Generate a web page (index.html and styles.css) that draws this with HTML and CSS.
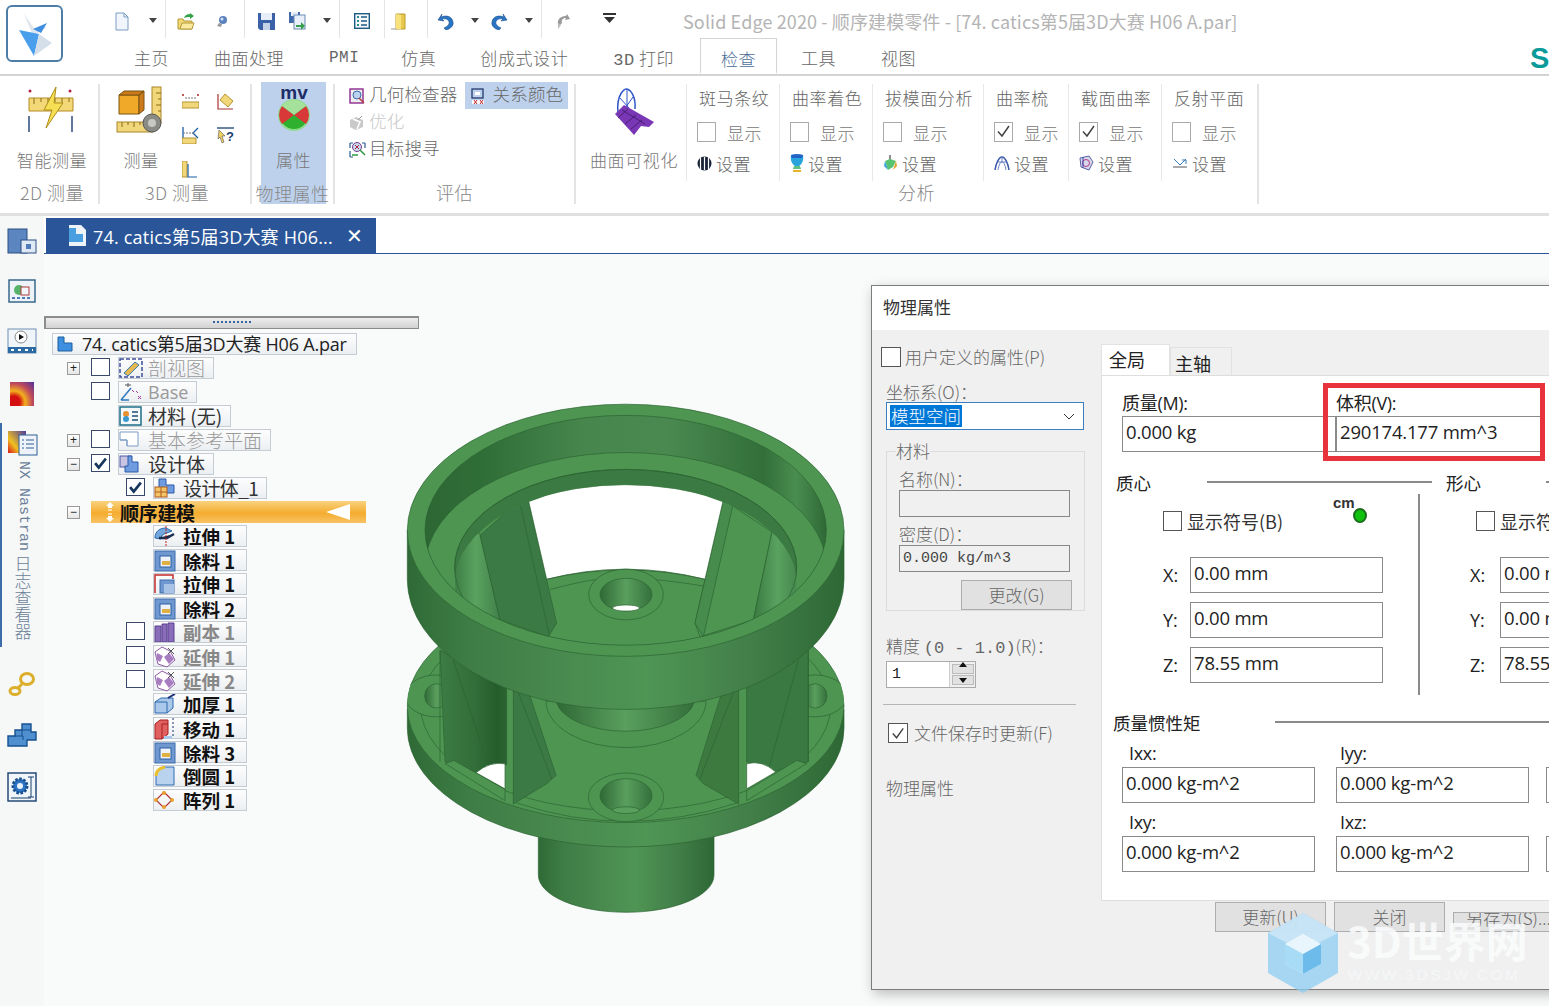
FILE: index.html
```html
<!DOCTYPE html>
<html lang="zh">
<head>
<meta charset="utf-8">
<title>Solid Edge 2020</title>
<link rel="stylesheet" href="styles.css">
</head>
<body>
<svg class="defs" width="0" height="0">
  <defs>
    <symbol id="ck" viewBox="0 0 19 19"><path d="M4 9.5l4 4.5 7-10" fill="none" stroke="#444" stroke-width="1.5"/></symbol>
    <symbol id="ckb" viewBox="0 0 19 19"><path d="M3.5 9l4 5 8-10" fill="none" stroke="#16365c" stroke-width="3"/></symbol>
    <symbol id="dd" viewBox="0 0 10 6"><path d="M1 0h8L5 5z" fill="#444"/></symbol>
    <symbol id="rem" viewBox="0 0 22 22"><rect x="1" y="1" width="20" height="20" fill="#6f98d0" stroke="#3d6cab"/><rect x="6" y="6" width="11" height="11" fill="#eef3fa" stroke="#2d5f9f"/><rect x="8" y="11" width="8" height="4" fill="#e0b040"/></symbol>
    <symbol id="ext" viewBox="0 0 22 22"><path d="M1 6l7-5 8 4 5 9-8 7-9-3z" fill="#fff" stroke="#8d5aa6"/><path d="M3 7l6 3-3 6-4-3zM10 11l5-4 5 6-5 5z" fill="#a77cc0"/><path d="M14 2l6 6M20 2l-6 6" stroke="#555"/></symbol>
  </defs>
</svg>
<div class="app">
  <header class="head">
    <div class="logo">
      <svg width="44" height="46" viewBox="0 0 44 46"><path d="M11 3l10 14 13-1-14 9z" fill="#dfe6ee"/><path d="M20 18l14-6-6 10z" fill="#3f8fe0"/><path d="M6 19l20 4-5 22z" fill="#4a9fec"/><path d="M26 23l13 9-18 13z" fill="#d5dfea"/></svg>
    </div>
    <div class="head-right">
      <div class="qat">
        <span class="q q-new"><svg width="14" height="19" viewBox="0 0 14 19"><path d="M1 1h8l4 4v13H1z" fill="#f1f6fc" stroke="#7d9cc4"/><path d="M9 1v4h4" fill="none" stroke="#7d9cc4"/></svg></span>
        <svg class="dda" viewBox="0 0 10 6"><use href="#dd"/></svg>
        <span class="qsep s1"></span>
        <span class="q q-open"><svg width="18" height="17" viewBox="0 0 18 17"><path d="M1 6h5l1 2h8v8H1z" fill="#f2d873" stroke="#b49a3a"/><path d="M3 16l2-6h12l-2 6z" fill="#fbe9a0" stroke="#b49a3a"/><path d="M7 5c1-3 3-4 6-4V0l4 3-4 3V4C11 4 9 4 7 5z" fill="#34a34a"/></svg></span>
        <span class="q q-find"><svg width="12" height="13" viewBox="0 0 12 13"><circle cx="7" cy="5" r="4" fill="#5b82bd"/><circle cx="6" cy="4" r="1.5" fill="#cfe0f5"/><path d="M3 8l-2 3 4 1 1-3z" fill="#9a9a9a"/></svg></span>
        <span class="qsep s2"></span>
        <span class="q q-save"><svg width="17" height="17" viewBox="0 0 17 17"><path d="M0 0h17v17H2l-2-2z" fill="#3a60a8"/><rect x="3" y="0" width="11" height="7" fill="#e8eef7"/><rect x="5" y="10" width="7" height="7" fill="#c5d3e8"/></svg></span>
        <span class="q q-saveas"><svg width="17" height="18" viewBox="0 0 17 18"><rect x="0" y="0" width="11" height="11" fill="#4069ae"/><rect x="2" y="0" width="7" height="4" fill="#e8eef7"/><rect x="5" y="3" width="11" height="14" fill="#e9eff8" stroke="#6b8ab7"/><path d="M7 13h5v-3l4 4-4 4v-3H7z" fill="#38a04c"/></svg></span>
        <svg class="ddb" viewBox="0 0 10 6"><use href="#dd"/></svg>
        <span class="qsep s3"></span>
        <span class="q q-props"><svg width="16" height="16" viewBox="0 0 16 16"><rect x=".7" y=".7" width="14.6" height="14.6" fill="#f4f8fc" stroke="#1c5a84" stroke-width="1.4"/><path d="M3 4h2M3 8h2M3 12h2" stroke="#2b8a8a" stroke-width="2"/><path d="M7 4h6M7 8h6M7 12h6" stroke="#1c5a84" stroke-width="1.3"/></svg></span>
        <span class="qsep s4"></span>
        <span class="q q-door"><svg width="16" height="18" viewBox="0 0 16 18"><path d="M1 17h6" stroke="#999"/><path d="M6 2h9v15H6z" fill="#e8c94e" stroke="#b99a2c"/><path d="M6 2l5 1v14l-5 0z" fill="#f7e27c"/></svg></span>
        <span class="qsep s5"></span>
        <span class="q q-undo"><svg width="17" height="17" viewBox="0 0 17 17"><path d="M5 1L1 7l6 1-2-2c4-1 8 1 7 5-1 2-3 3-5 4l2 2c4-1 8-4 7-8C15 3 9 2 4 4z" fill="#2a74c4" stroke="#174f8e" stroke-width=".6"/></svg></span>
        <svg class="ddc" viewBox="0 0 10 6"><use href="#dd"/></svg>
        <span class="q q-redo"><svg width="17" height="17" viewBox="0 0 17 17"><path d="M12 1l4 6-6 1 2-2C8 5 4 7 5 11c1 2 3 3 5 4l-2 2C4 16 0 13 1 9 2 3 8 2 13 4z" fill="#2a74c4" stroke="#174f8e" stroke-width=".6"/></svg></span>
        <svg class="ddd" viewBox="0 0 10 6"><use href="#dd"/></svg>
        <span class="qsep s6"></span>
        <span class="q q-gray"><svg width="15" height="17" viewBox="0 0 15 17"><path d="M11 1l3 5-5 1 1-2C7 5 5 7 6 10l-3 3C0 9 3 3 10 3z" fill="#999"/><path d="M2 10l3 2-3 4z" fill="#bbb"/></svg></span>
        <span class="q q-cust"><svg width="13" height="10" viewBox="0 0 13 10"><path d="M0 0h13v2H0z" fill="#333"/><path d="M1 4h11L6.500 10z" fill="#333"/></svg></span>
        <span class="title">Solid Edge 2020 - 顺序建模零件 - [74. catics第5届3D大赛 H06 A.par]</span>
      </div>
      <nav class="tabs">
        <span class="t t1">主页</span>
        <span class="t t2">曲面处理</span>
        <span class="t t3 mono">PMI</span>
        <span class="t t4">仿真</span>
        <span class="t t5">创成式设计</span>
        <span class="t t6"><span class="mono">3D</span> 打印</span>
        <span class="t t7 active">检查</span>
        <span class="t t8">工具</span>
        <span class="t t9">视图</span>
        <span class="brand">S</span>
      </nav>
    </div>
  </header>

  <section class="ribbon">
    <div class="g g1">
      <div class="big">
        <svg class="bigi" width="50" height="50" viewBox="0 0 50 50"><circle cx="3" cy="5" r="1.500" fill="#b02040"/><circle cx="43" cy="5" r="1.500" fill="#b02040"/><path d="M2 12h44v13H2z" fill="#f3d878" stroke="#b58b24"/><path d="M7 12v6M14 12v4M21 12v6M28 12v4M35 12v6M42 12v4" stroke="#8a6a18"/><path d="M2 30v16M45 30v16" stroke="#2d4a80" stroke-width="1.500"/><path d="M29 1L17 24h8l-6 18 17-25h-9z" fill="#f7df55" stroke="#ad8d1c"/></svg>
        <span class="bl">智能测量</span>
      </div>
      <div class="gl">2D 测量</div>
    </div>
    <div class="g g2">
      <div class="gbody g2b">
        <div class="big m">
          <svg class="bigi" width="50" height="50" viewBox="0 0 50 50"><path d="M3 9h20v19H3z" fill="#f0a928" stroke="#7a5510"/><path d="M3 9l5-4h20l-5 4zM23 9l5-4v19l-5 4z" fill="#cb7b1c" stroke="#7a5510"/><rect x="36" y="1" width="9" height="36" fill="#f2d67a" stroke="#a9862b"/><rect x="1" y="36" width="36" height="10" fill="#f2d67a" stroke="#a9862b"/><path d="M6 36v5M12 36v3M18 36v5M24 36v3M40 7h5M42 13h3M40 19h5M42 25h3" stroke="#8a6a18"/><circle cx="36" cy="37" r="9" fill="#8b8b85" stroke="#555"/><circle cx="36" cy="37" r="4" fill="#c9c9c2"/></svg>
          <span class="bl">测量</span>
        </div>
        <div class="minis">
          <svg width="17" height="17" viewBox="0 0 17 17"><circle cx="1" cy="2" r="1" fill="#a22"/><circle cx="16" cy="2" r="1" fill="#a22"/><path d="M3 5h11" stroke="#777" stroke-dasharray="2 1"/><rect x="0" y="9" width="17" height="6" fill="#f2d67a" stroke="#b59535"/></svg>
          <svg width="17" height="17" viewBox="0 0 17 17"><path d="M1 1v15h15" fill="none" stroke="#a33" stroke-width="1.200"/><path d="M3 7l5-6 8 7-5 6z" fill="#f2d67a" stroke="#b59535"/></svg>
          <svg width="17" height="18" viewBox="0 0 17 18"><path d="M1 1v17M16 2L11 7l5 5" fill="none" stroke="#1b5ea6" stroke-width="1.300"/><path d="M1 7h11" stroke="#777" stroke-dasharray="2 1"/><rect x="0" y="12" width="14" height="6" fill="#f2d67a" stroke="#b59535"/></svg>
          <svg width="17" height="17" viewBox="0 0 17 17"><path d="M0 1h17" stroke="#16406e" stroke-width="1.300"/><path d="M2 3l6 6-3 0 2 6-2 1-2-6-2 2z" fill="#f0d060" stroke="#555" stroke-width=".6"/><text x="9" y="14" class="svgq">?</text></svg>
          <svg width="15" height="17" viewBox="0 0 15 17"><rect x="0" y="0" width="5" height="16" fill="#f2d67a" stroke="#b59535"/><path d="M6 3v13h9" fill="none" stroke="#1b5ea6" stroke-width="1.200"/></svg>
        </div>
      </div>
      <div class="gl">3D 测量</div>
    </div>
    <div class="g g3">
      <div class="big hl">
        <svg class="bigi" width="40" height="50" viewBox="0 0 40 50"><text x="20" y="17" class="svgmv">mv</text><circle cx="20" cy="33" r="15" fill="#2fb02f" stroke="#8fdc8f" stroke-width="2"/><path d="M20 33L8 24A15 15 0 0 0 8 42Z" fill="#d83838"/><path d="M20 33L32 24A15 15 0 0 1 32 42Z" fill="#d83838"/><path d="M20 33L8 24A15 15 0 0 1 32 24Z" fill="#a6e19b"/></svg>
        <span class="bl">属性</span>
      </div>
      <div class="gl">物理属性</div>
    </div>
    <div class="g g4">
      <div class="gbody evals">
        <div class="ev">
          <span class="evi"><svg width="16" height="16" viewBox="0 0 16 16"><rect x="1" y="1" width="13" height="14" fill="#eee" stroke="#8e2a8e" stroke-width="1.400"/><circle cx="8" cy="7" r="4" fill="#bcd3ee" stroke="#3a6db0"/><path d="M10 10l5 5" stroke="#b04040" stroke-width="1.500"/></svg></span>
          <span class="evt">几何检查器</span>
          <span class="ev-hl"><svg width="14" height="16" viewBox="0 0 14 16"><rect x="1" y="1" width="11" height="9" fill="none" stroke="#223a6c" stroke-width="1.300"/><rect x="4" y="4" width="5" height="3" fill="#fff"/><path d="M1 12h12v4H1z" fill="#fff"/><path d="M3 12l3 4M6 12l-3 4M9 12l3 4M12 12l-3 4" stroke="#c02020"/></svg><span class="evt">关系颜色</span></span>
        </div>
        <div class="ev off">
          <span class="evi"><svg width="15" height="16" viewBox="0 0 15 16"><path d="M1 5l6-3 7 3v7l-7 3-6-3z" fill="#c9c9c9"/><path d="M4 4l7 3-3 7" fill="none" stroke="#fff" stroke-width="1.500"/><path d="M9 5l4-4" stroke="#999"/></svg></span>
          <span class="evt">优化</span>
        </div>
        <div class="ev">
          <span class="evi"><svg width="17" height="17" viewBox="0 0 17 17"><path d="M1 2h3M1 2v5M1 10v6M1 16h3M16 2h-3M16 2v5" fill="none" stroke="#2a5d8e" stroke-width="1.200"/><circle cx="8" cy="6" r="4.500" fill="#c6d8ec" stroke="#7a3a8a"/><path d="M6 4l4 4M10 4l-4 4" stroke="#b02040"/><path d="M11 9l5 5M3 14h6" stroke="#2f9a44" stroke-width="1.500"/></svg></span>
          <span class="evt">目标搜寻</span>
        </div>
      </div>
      <div class="gl">评估</div>
    </div>
    <div class="g g5">
      <div class="gbody g5b">
        <div class="big v">
          <svg class="bigi" width="42" height="50" viewBox="0 0 42 50"><path d="M5 27C3 8 12 2 14 3c4 1 9 8 8 20" fill="#fff" stroke="#2f55c8" stroke-width="1.500"/><path d="M14 3v18M7 12l9 10M20 11l-7 10" stroke="#2f55c8"/><path d="M2 28l9-9 30 17-5 5-8-1-7 9z" fill="#7a37b5"/><path d="M9 24l23 14M5 32l10-9M12 38l11-9M18 43l11-9" stroke="#3c1a66" stroke-width=".8"/></svg>
          <span class="bl">曲面可视化</span>
        </div>
        <div class="an a1">
          <div class="ant">斑马条纹</div>
          <div class="anr"><span class="cb"></span><span class="ans">显示</span></div>
          <div class="anr set"><svg width="15" height="15" viewBox="0 0 15 15"><circle cx="7.500" cy="7.500" r="7" fill="#1a2438"/><path d="M3.500 1.500v12M7.500 1v13M11.500 1.500v12" stroke="#fff" stroke-width="1.200"/></svg><span>设置</span></div>
        </div>
        <div class="an a2">
          <div class="ant">曲率着色</div>
          <div class="anr"><span class="cb"></span><span class="ans">显示</span></div>
          <div class="anr set"><svg width="14" height="19" viewBox="0 0 14 19"><path d="M1 1c3-1 9-1 12 0 1 5-1 9-4 11H5C2 10 0 6 1 1z" fill="#27a4dc"/><path d="M1 1c3-1 9-1 12 0l-1 3H2z" fill="#2362c4"/><path d="M4 12h6l1 3H3z" fill="#5ec082"/><path d="M3 16h8v2H3z" fill="#e8b22c"/></svg><span>设置</span></div>
        </div>
        <div class="an a3">
          <div class="ant">拔模面分析</div>
          <div class="anr"><span class="cb"></span><span class="ans">显示</span></div>
          <div class="anr set"><svg width="15" height="17" viewBox="0 0 15 17"><path d="M7 0v5" stroke="#222"/><path d="M2 6l5-2 6 2-3 6-5 3z" fill="#58c472"/><path d="M2 6l3 9-4-4z" fill="#3aa0d8"/><path d="M13 6l-3 9 4-4z" fill="#e2a12a"/></svg><span>设置</span></div>
        </div>
        <div class="an a4">
          <div class="ant">曲率梳</div>
          <div class="anr"><span class="cb"><svg class="c" width="19" height="19"><use href="#ck"/></svg></span><span class="ans">显示</span></div>
          <div class="anr set"><svg width="16" height="15" viewBox="0 0 16 15"><path d="M1 14C2 7 5 1 8 1s6 6 7 13" fill="none" stroke="#3a58a8" stroke-width="1.500"/><path d="M4 14c1-5 2-8 4-8s3 3 4 8M4 6l8 0M8 1v5" fill="none" stroke="#6a7ec8"/></svg><span>设置</span></div>
        </div>
        <div class="an a5">
          <div class="ant">截面曲率</div>
          <div class="anr"><span class="cb"><svg class="c" width="19" height="19"><use href="#ck"/></svg></span><span class="ans">显示</span></div>
          <div class="anr set"><svg width="15" height="16" viewBox="0 0 15 16"><path d="M1 3l9-2 4 6-4 8-8-3z" fill="#d8d8ea" stroke="#5a62a8"/><circle cx="7" cy="8" r="3.500" fill="none" stroke="#b03a8a"/><path d="M4 2v11" stroke="#3a4aa8"/></svg><span>设置</span></div>
        </div>
        <div class="an a6">
          <div class="ant">反射平面</div>
          <div class="anr"><span class="cb"></span><span class="ans">显示</span></div>
          <div class="anr set"><svg width="16" height="12" viewBox="0 0 16 12"><path d="M1 10h14" stroke="#555"/><path d="M2 2l6 6 6-6" fill="none" stroke="#3a7ab8"/><path d="M10 3h4v4" fill="none" stroke="#3a7ab8"/></svg><span>设置</span></div>
        </div>
      </div>
      <div class="gl">分析</div>
    </div>
  </section>

  <main class="work">
    <aside class="rail">
      <svg class="ri" width="30" height="26" viewBox="0 0 30 26"><rect x="1" y="1" width="19" height="24" fill="#5c86bf" stroke="#2c4f84"/><rect x="14" y="12" width="15" height="13" fill="#dfe9f5" stroke="#2c4f84"/><rect x="19" y="16" width="5" height="5" fill="#4f7cb8"/></svg>
      <svg class="ri" width="28" height="24" viewBox="0 0 28 24"><rect x="1" y="1" width="26" height="22" fill="#eef3f9" stroke="#2c5f84" stroke-width="1.400"/><circle cx="11" cy="11" r="5" fill="#56b36c"/><rect x="13" y="8" width="8" height="8" fill="#f2f6fb" stroke="#b03a3a"/><path d="M4 19h20" stroke="#4f7cb8" stroke-width="2" stroke-dasharray="3 2"/></svg>
      <svg class="ri" width="30" height="26" viewBox="0 0 30 26"><rect x="1" y="1" width="28" height="24" fill="#f0f5fa" stroke="#6f8fb4"/><circle cx="14" cy="9" r="6" fill="#fff" stroke="#888"/><path d="M12 6l5 3-5 3z" fill="#111"/><rect x="1" y="19" width="28" height="6" fill="#2c6aa4"/><path d="M4 22h22" stroke="#fff" stroke-width="2" stroke-dasharray="3 4"/></svg>
      <div class="ri heat"></div>
      <div class="rail-blue">
        <svg class="ri" width="30" height="25" viewBox="0 0 30 25"><defs><linearGradient id="h2" x1="0" y1="1" x2="1" y2="0"><stop offset="0" stop-color="#d81818"/><stop offset=".35" stop-color="#f0c020"/><stop offset="1" stop-color="#4a3aa0"/></linearGradient></defs><rect x="0" y="0" width="18" height="22" fill="url(#h2)"/><rect x="11" y="4" width="18" height="20" fill="#eef3fa" stroke="#2c5f94"/><path d="M14 9h2M14 13h2M14 17h2M18 9h8M18 13h8M18 17h8" stroke="#2c5f94"/></svg>
        <div class="vtext"><span class="mono">NX Nastran</span> 日志查看器</div>
      </div>
      <svg class="ri key" width="28" height="26" viewBox="0 0 28 26"><ellipse cx="19" cy="8" rx="6.500" ry="5.500" fill="none" stroke="#dcae2a" stroke-width="3"/><ellipse cx="7" cy="20" rx="5" ry="3.500" fill="none" stroke="#dcae2a" stroke-width="3"/><path d="M14 13l-5 5" stroke="#dcae2a" stroke-width="3"/></svg>
      <svg class="ri" width="30" height="26" viewBox="0 0 30 26"><path d="M1 15h7v-6h7V3h9v8h5v8h-9v6H1z" fill="#4f8fd0" stroke="#17508e" stroke-width="1.400"/><path d="M8 15h8v4M15 9v6M15 9h9" fill="none" stroke="#17508e"/></svg>
      <svg class="ri" width="30" height="30" viewBox="0 0 30 30"><rect x="1" y="1" width="28" height="28" fill="#f0f5fa" stroke="#173f70" stroke-width="1.400"/><circle cx="13" cy="14" r="7" fill="#2f73c4" stroke="#174f8e" stroke-width="3" stroke-dasharray="2.500 1.500"/><circle cx="13" cy="14" r="3" fill="#eaf2fb"/><path d="M24 5v20M21 5h6M21 25h6M4 26h20" stroke="#173f70"/></svg>
    </aside>
    <div class="stage">
      <div class="doctabs">
        <div class="doctab">
          <svg width="20" height="22" viewBox="0 0 20 22"><path d="M2 0h12l5 5v16H2z" fill="#eef3fa"/><path d="M2 3h7v6h7v8H2z" fill="#4a9fe0"/></svg>
          <span class="doctab-t">74. catics第5届3D大赛 H06...</span>
          <span class="doctab-x">✕</span>
        </div>
      </div>
      <div class="canvas">
        <svg class="model" viewBox="0 0 1410 1568" width="470" height="530" preserveAspectRatio="none">
          <defs>
            <linearGradient id="gs"><stop offset="0" stop-color="#2f6a36"/><stop offset=".14" stop-color="#3e7d45"/><stop offset=".38" stop-color="#4a8b50"/><stop offset=".55" stop-color="#4f9554"/><stop offset=".78" stop-color="#427f49"/><stop offset="1" stop-color="#2e6935"/></linearGradient>
            <linearGradient id="gw"><stop offset="0" stop-color="#2d6734"/><stop offset=".14" stop-color="#2f6d37"/><stop offset=".4" stop-color="#47874d"/><stop offset=".6" stop-color="#4a8a50"/><stop offset=".84" stop-color="#326f39"/><stop offset=".92" stop-color="#4a8d50"/><stop offset="1" stop-color="#2d6734"/></linearGradient>
            <linearGradient id="gc"><stop offset="0" stop-color="#3a7941"/><stop offset=".5" stop-color="#5aa25f"/><stop offset="1" stop-color="#41804a"/></linearGradient>
            <linearGradient id="gd"><stop offset="0" stop-color="#3d7c44"/><stop offset=".55" stop-color="#316d38"/><stop offset=".85" stop-color="#255c2b"/><stop offset="1" stop-color="#2a6431"/></linearGradient>
            <linearGradient id="gh"><stop offset="0" stop-color="#2f6a36"/><stop offset=".5" stop-color="#5a9f5e"/><stop offset="1" stop-color="#34703b"/></linearGradient>
            <clipPath id="rim"><ellipse cx="707" cy="415" rx="602" ry="340"/></clipPath>
            <clipPath id="hole"><ellipse cx="707" cy="570" rx="512" ry="290"/></clipPath>
            <clipPath id="disc"><ellipse cx="707" cy="935" rx="655" ry="372"/></clipPath>
          </defs>
          <g class="ml">
            <path d="M445 1290V1435A263 110 0 0 0 972 1435V1290Z" fill="url(#gs)"/>
            <path d="M52 945V1000A655 352 0 0 0 1362 1000V945Z" fill="url(#gs)"/>
            <ellipse cx="707" cy="935" rx="655" ry="345" class="top"/>
            <g clip-path="url(#disc)">
              <ellipse cx="707" cy="935" rx="615" ry="310" fill="none"/>
              <ellipse cx="140" cy="905" rx="95" ry="62" class="top"/>
              <ellipse cx="140" cy="905" rx="36" ry="36" fill="url(#gh)"/>
              <ellipse cx="1275" cy="905" rx="95" ry="62" class="top"/>
              <ellipse cx="1275" cy="905" rx="36" ry="36" fill="url(#gh)"/>
            </g>
            <path d="M150 770L350 880V1108L260 1130 165 1100Z" fill="url(#gd)"/>
            <path d="M190 800L300 1125M150 770V1100"/>
            <path d="M258 1132Q300 1098 345 1106V1180Z" fill="#fff" stroke="none"/>
            <path d="M165 1105L192 1096 345 1182V1215Z" class="top"/>
            <path d="M370 888L420 905 498 1140 470 1165 370 1225Z" fill="#3c7a45"/>
            <path d="M385 895L485 1150"/>
            <path d="M1046 888L992 905 918 1140 940 1165 1046 1225Z" fill="#3d7a40"/>
            <path d="M1030 895L930 1150"/>
            <path d="M1070 880L1255 770V1100L1150 1130 1070 1100Z" fill="#3a7941"/>
            <path d="M1225 800L1135 1125M1255 770V1100"/>
            <path d="M1070 1106Q1115 1093 1157 1130L1070 1180Z" fill="#fff" stroke="none"/>
            <path d="M1070 1185L1220 1096 1250 1105 1070 1215Z" class="top"/>
            <path d="M468 920A240 138 0 0 0 948 920Z" class="top"/>
            <path d="M500 925A208 98 0 0 0 912 925Z" fill="url(#gh)"/>
            <path d="M380 1222Q708 1330 1040 1222" fill="none"/>
            <ellipse cx="708" cy="1205" rx="113" ry="72" class="top"/>
            <ellipse cx="708" cy="1200" rx="78" ry="50" fill="url(#gh)"/>
            <ellipse cx="708" cy="1243" rx="40" ry="10" fill="#5a9f5e"/>
            <path d="M52 415V560A655 385 0 0 0 1362 560V415Z" fill="url(#gs)"/>
            <ellipse cx="707" cy="415" rx="655" ry="373" class="top"/>
            <g clip-path="url(#rim)">
              <rect x="100" y="70" width="1215" height="700" fill="url(#gw)" stroke="none"/>
              <ellipse cx="707" cy="525" rx="602" ry="340" class="top"/>
              <ellipse cx="707" cy="525" rx="513" ry="290" fill="#3b7a42"/>
              <g clip-path="url(#hole)">
                <rect x="190" y="270" width="1040" height="520" fill="#4f9552" stroke="none"/>
                <path d="M185 400L270 425 330 680 185 640Z" fill="url(#gc)"/>
                <path d="M270 430L390 325H415L500 690 475 730 330 680Z" fill="#3c7a45"/>
                <path d="M390 335L478 725"/>
                <path d="M1000 325L1146 420 1090 680 930 730 915 690Z" fill="#4f9552"/>
                <path d="M1000 325L1030 335 940 730 915 690Z" fill="#478c4c"/>
                <path d="M1146 420L1235 480V600L1090 680Z" fill="url(#gc)"/>
                <path d="M415 325Q705 235 1000 325L945 560Q705 500 470 560Z" fill="#fff" stroke="none"/>
                <path d="M470 560Q705 505 945 560" fill="none"/>
                <path d="M480 590Q600 560 630 560M780 560Q850 565 940 580" fill="none"/>
                <ellipse cx="708" cy="605" rx="112" ry="75" class="top"/>
                <ellipse cx="708" cy="605" rx="78" ry="48" fill="url(#gh)"/>
                <ellipse cx="708" cy="645" rx="40" ry="9" fill="#fff" stroke="none"/>
              </g>
              <ellipse cx="707" cy="525" rx="513" ry="290" fill="none"/>
            </g>
            <ellipse cx="707" cy="415" rx="602" ry="340" fill="none"/>
          </g>
        </svg>

        <div class="tree">
          <div class="grip"><span class="dots"></span></div>
          <div class="row r-root"><span class="node root"><svg width="16" height="16" viewBox="0 0 16 16"><path d="M1 1h6v6h8v8H1z" fill="#3f8fe0" stroke="#1c5f9f"/></svg><span>74. catics第5届3D大赛 H06 A.par</span></span></div>
          <div class="row"><span class="ex">+</span><span class="tc"></span><span class="node dim"><svg width="24" height="20" viewBox="0 0 24 20"><rect x="1" y="1" width="22" height="18" fill="none" stroke="#3d4d9c" stroke-width="1.500" stroke-dasharray="4 2"/><path d="M5 15L16 4l4 3L9 18z" fill="#e3b953" stroke="#3d7ab0"/></svg><span>剖视图</span></span></div>
          <div class="row"><span class="ex none"></span><span class="tc"></span><span class="node dim base"><svg width="22" height="20" viewBox="0 0 22 20"><path d="M2 18L12 6M2 18h8" stroke="#2f7ac0" stroke-width="1.500"/><path d="M6 3h6M9 1v4" stroke="#555"/><path d="M13 8l2 2M17 9l2 2M19 14l3 3M22 14l-3 3" stroke="#a33aa3"/></svg><span>Base</span></span></div>
          <div class="row"><span class="ex none"></span><span class="tc none"></span><span class="node"><svg width="23" height="20" viewBox="0 0 23 20"><rect x="1" y="1" width="21" height="18" fill="#f3f8fb" stroke="#1d6f86" stroke-width="1.500"/><circle cx="7" cy="8" r="3" fill="#e89030"/><circle cx="7" cy="13" r="3" fill="#3a9ad0"/><path d="M13 6h6M13 10h6M13 14h6" stroke="#1d4f76" stroke-width="1.500"/></svg><span>材料 (无)</span></span></div>
          <div class="row"><span class="ex">+</span><span class="tc"></span><span class="node dim"><svg width="20" height="18" viewBox="0 0 20 18"><path d="M1 1h18v14H8v-6H1z" fill="#fff" stroke="#7b9cc4"/><path d="M1 9h7v6" fill="none" stroke="#7b9cc4"/></svg><span>基本参考平面</span></span></div>
          <div class="row"><span class="ex">−</span><span class="tc"><svg width="17" height="17"><use href="#ckb"/></svg></span><span class="node"><svg width="20" height="18" viewBox="0 0 20 18"><rect x="1" y="1" width="11" height="11" fill="#c9c4e2" stroke="#4a58a8"/><path d="M9 1h4v6h6v10H6v-6h3z" fill="#6f9ce0" stroke="#2a5aa8"/></svg><span>设计体</span></span></div>
          <div class="row lv2"><span class="tc"><svg width="17" height="17"><use href="#ckb"/></svg></span><span class="node"><svg width="21" height="20" viewBox="0 0 21 20"><path d="M5 1h7v6h8v8H5z" fill="#6f9ce0" stroke="#2a5aa8"/><rect x="1" y="9" width="12" height="10" fill="#f3c565" stroke="#b05a20"/><path d="M7 9v10M1 14h12" stroke="#b05a20"/></svg><span class="tight">设计体_1</span></span></div>
          <div class="row"><span class="ex">−</span><span class="seq"><svg class="seq-ar" width="14" height="20" viewBox="0 0 14 20"><path d="M7 0l4 4H9v2H5V4H3zM7 20l4-4H9v-2H5v2H3z" fill="#fff"/><path d="M5 8h4M5 12h4" stroke="#fff"/></svg><b>顺序建模</b><svg class="seq-tri" width="26" height="16" viewBox="0 0 26 16"><path d="M0 8L24 0v16z" fill="#fff"/></svg></span></div>
          <div class="row lv3"><span class="node st"><svg width="22" height="20" viewBox="0 0 22 20"><path d="M1 12C1 5 6 2 12 2l6 3-8 3C8 9 7 11 7 13z" fill="#74a7dc" stroke="#2a6ab0"/><path d="M5 12h8l7-4" stroke="#1c2f52" stroke-width="2.500"/><path d="M12 0v20" stroke="#c42020" stroke-dasharray="2 1"/></svg><span>拉伸 1</span></span></div>
          <div class="row lv3"><span class="node st"><svg width="22" height="22"><use href="#rem"/></svg><span>除料 1</span></span></div>
          <div class="row lv3"><span class="node st"><svg width="21" height="20" viewBox="0 0 21 20"><path d="M1 19V1h18v4" fill="none" stroke="#c42828" stroke-width="1.500"/><rect x="6" y="6" width="14" height="13" fill="#6f98d0" stroke="#3d6cab"/><rect x="10" y="10" width="10" height="9" fill="#a9c3e6"/></svg><span>拉伸 1</span></span></div>
          <div class="row lv3"><span class="node st"><svg width="22" height="22"><use href="#rem"/></svg><span>除料 2</span></span></div>
          <div class="row lv3 cbrow"><span class="tc abs-tc"></span><span class="node st dim"><svg width="21" height="20" viewBox="0 0 21 20"><path d="M1 4h6v16H1zM8 2h5v18H8zM14 1h6v19h-6z" fill="#8a6db8" stroke="#5a3f90"/></svg><span>副本 1</span></span></div>
          <div class="row lv3 cbrow"><span class="tc abs-tc"></span><span class="node st dim"><svg width="22" height="22"><use href="#ext"/></svg><span>延伸 1</span></span></div>
          <div class="row lv3 cbrow"><span class="tc abs-tc"></span><span class="node st dim"><svg width="22" height="22"><use href="#ext"/></svg><span>延伸 2</span></span></div>
          <div class="row lv3"><span class="node st"><svg width="22" height="20" viewBox="0 0 22 20"><path d="M1 8l6-4h12v10l-6 5H1z" fill="#a9c8ea" stroke="#2f6ab0"/><path d="M1 8h12v11" fill="none" stroke="#2f6ab0"/><path d="M14 4l7-4" stroke="#1c2f72" stroke-width="2"/></svg><span>加厚 1</span></span></div>
          <div class="row lv3"><span class="node st"><svg width="22" height="22" viewBox="0 0 22 22"><path d="M1 6l5-4h8v14l-6 5H1z" fill="#e06060" stroke="#a82020"/><path d="M8 6h6M8 6v15" stroke="#a82020"/><path d="M19 0v20" stroke="#1c2f72" stroke-dasharray="2 2"/><path d="M10 18h8v3h-8z" fill="#a9c8ea"/></svg><span>移动 1</span></span></div>
          <div class="row lv3"><span class="node st"><svg width="22" height="22"><use href="#rem"/></svg><span>除料 3</span></span></div>
          <div class="row lv3"><span class="node st"><svg width="22" height="20" viewBox="0 0 22 20"><path d="M2 19V9C2 5 6 1 11 1h9v18z" fill="#b9d3ef" stroke="#2f6ab0"/><path d="M2 10C2 5 6 2 11 1" fill="none" stroke="#e8c030" stroke-width="3"/></svg><span>倒圆 1</span></span></div>
          <div class="row lv3"><span class="node st"><svg width="20" height="18" viewBox="0 0 20 18"><path d="M10 1l8 8-8 8-8-8z" fill="none" stroke="#b03030" stroke-width="1.200"/><circle cx="10" cy="2" r="2" fill="#e8a030"/><circle cx="18" cy="9" r="2" fill="#e8a030"/><circle cx="10" cy="16" r="2" fill="#e8a030"/><circle cx="2" cy="9" r="2" fill="#e8a030"/></svg><span>阵列 1</span></span></div>
        </div>

        <section class="dlg">
          <div class="dlg-title">物理属性</div>
          <div class="dlg-body">
            <div class="dl">
              <label class="chk ck-user"><span class="box"></span>用户定义的属性(P)</label>
              <div class="lab cs">坐标系(O)：</div>
              <div class="sel"><span class="sel-t">模型空间</span><svg width="12" height="7" viewBox="0 0 12 7"><path d="M1 1l5 5 5-5" fill="none" stroke="#333"/></svg></div>
              <fieldset class="grp">
                <legend>材料</legend>
                <div class="lab">名称(N)：</div>
                <div class="inp dis"></div>
                <div class="lab den">密度(D)：</div>
                <div class="inp dis mono">0.000 kg/m^3</div>
                <div class="btn chg">更改(G)</div>
              </fieldset>
              <div class="lab prec">精度 <span class="mono">(0 - 1.0)</span>(R)：</div>
              <div class="spin"><span class="spin-v">1</span><span class="spin-b"><i class="up"></i><i class="dn"></i></span></div>
              <hr class="dh">
              <label class="chk ck-save"><span class="box"><svg width="19" height="19"><use href="#ck"/></svg></span>文件保存时更新(F)</label>
              <div class="lab phys">物理属性</div>
            </div>
            <div class="dr">
              <div class="dtabs"><span class="dt on">全局</span><span class="dt">主轴</span></div>
              <div class="panel">
                <div class="mv">
                  <div class="fld"><span>质量(M):</span><div class="box2 wide">0.000 kg</div></div>
                  <div class="fld vol"><span>体积(V):</span><div class="box2 volb">290174.177 mm^3</div></div>
                </div>
                <div class="sec sec1">
                  <span>质心</span><i class="ln l1"></i><span class="sh">形心</span><i class="ln l2"></i>
                </div>
                <div class="cols">
                  <div class="col c-a">
                    <div class="sym"><label class="chk"><span class="box"></span>显示符号(B)</label><span class="cm">cm<i></i></span></div>
                    <div class="xyz"><span>X:</span><div class="box2">0.00 mm</div></div>
                    <div class="xyz"><span>Y:</span><div class="box2">0.00 mm</div></div>
                    <div class="xyz"><span>Z:</span><div class="box2">78.55 mm</div></div>
                  </div>
                  <div class="col c-b">
                    <div class="sym"><label class="chk"><span class="box"></span>显示符号</label></div>
                    <div class="xyz"><span>X:</span><div class="box2">0.00 mm</div></div>
                    <div class="xyz"><span>Y:</span><div class="box2">0.00 mm</div></div>
                    <div class="xyz"><span>Z:</span><div class="box2">78.55 mm</div></div>
                  </div>
                </div>
                <div class="sec sec2"><span>质量惯性矩</span><i class="ln l3"></i></div>
                <div class="mi">
                  <div class="fld f3"><span class="in">Ixx:</span><div class="box2">0.000 kg-m^2</div></div>
                  <div class="fld f3"><span class="in">Iyy:</span><div class="box2">0.000 kg-m^2</div></div>
                  <div class="fld f3"><span class="in">Izz:</span><div class="box2"></div></div>
                  <div class="fld f3"><span class="in">Ixy:</span><div class="box2">0.000 kg-m^2</div></div>
                  <div class="fld f3"><span class="in">Ixz:</span><div class="box2">0.000 kg-m^2</div></div>
                  <div class="fld f3"><span class="in">Iyz:</span><div class="box2"></div></div>
                </div>
              </div>
              <div class="acts">
                <span class="btn a">更新(U)</span><span class="btn a">关闭</span><span class="btn a cut"><span>另存为(S)...</span></span>
              </div>
            </div>
          </div>
        </section>

        <div class="wm">
          <svg width="72" height="82" viewBox="0 0 72 82"><path d="M36 1l35 20v40L36 81 1 61V21z" fill="#8ecdf2" opacity=".75"/><path d="M36 1l35 20-20 10-15-8-16 8L1 21z" fill="#cfe9f8" opacity=".8"/><path d="M36 22l18 10v20L36 62 18 52V32z" fill="#fff" opacity=".75"/><path d="M36 42l18-10v20L36 62z" fill="#6dbbea"/><path d="M36 42L18 32v20l18 10z" fill="#a8dbf6"/></svg>
          <div class="wm-t"><span class="wm-a">3D世界网</span><span class="wm-b">WWW.3DSJW.COM</span></div>
        </div>
      </div>
    </div>
  </main>
</div>
</body>
</html>
```

FILE: styles.css
```css
* { box-sizing: border-box; }
html, body { margin: 0; padding: 0; }
body {
  width: 1549px; height: 1006px; overflow: hidden; background: #fff;
  font-family: "Noto Sans CJK SC", "Noto Sans", sans-serif; color: #333;
}
.defs { position: absolute; }
.mono { font-family: "Liberation Mono", "Noto Sans CJK SC", monospace; }
.app { display: flex; flex-direction: column; width: 1549px; height: 1006px; }

/* header */
.head { display: flex; height: 76px; border-bottom: 2px solid #d4d4d4; background: #fff; flex: none; }
.logo {
  width: 57px; height: 57px; margin: 5px 0 0 6px; flex: none;
  border: 2px solid #4d7ea8; border-radius: 6px; display: flex; align-items: center; justify-content: center;
}
.head-right { position: relative; flex: 1; }
.qat { display: flex; align-items: center; height: 38px; padding: 4px 0 0 52px; }
.q { display: inline-flex; justify-content: center; flex: none; }
.dda, .ddb, .ddc, .ddd { width: 10px; height: 6px; flex: none; }
.qsep { width: 1px; height: 38px; margin-top: -4px; align-self: flex-start; background: #e4e4e4; flex: none; }
.q-new { width: 14px; margin-right: 19px; }
.dda { margin-right: 7px; }
.s1 { margin-right: 11px; }
.q-open { width: 18px; margin-right: 21px; }
.q-find { width: 12px; margin-right: 16px; }
.s2 { margin-right: 13px; }
.q-save { width: 17px; margin-right: 14px; }
.q-saveas { width: 17px; margin-right: 16px; }
.ddb { margin-right: 7px; }
.s3 { margin-right: 14px; }
.q-props { width: 16px; margin-right: 14px; }
.s4 { margin-right: 5px; }
.q-door { width: 16px; margin-right: 21px; }
.s5 { margin-right: 9px; }
.q-undo { width: 17px; margin-right: 16px; }
.ddc { margin-right: 11px; }
.q-redo { width: 17px; margin-right: 16px; }
.ddd { margin-right: 7px; }
.s6 { margin-right: 14px; }
.q-gray { width: 15px; margin-right: 32px; }
.q-cust { width: 13px; margin: -6px 67px 0 0; }
.title { font-size: 18px; color: #b4b4b4; white-space: nowrap; letter-spacing: .12px; margin-top: -1px; }
.tabs { display: flex; height: 36px; position: absolute; left: 0; right: 0; top: 38px; align-items: center; }
.t { font-size: 17px; color: #666; white-space: nowrap; flex: none; font-weight: 300; letter-spacing: .5px; height: 36px; line-height: 40px; }
.t1 { margin-left: 71px; }
.t2 { margin-left: 45px; }
.t3 { margin-left: 45px; font-size: 16px; }
.t4 { margin-left: 42px; }
.t5 { margin-left: 44px; letter-spacing: .6px; }
.t6 { margin-left: 45px; }
.t7 { margin-left: 26px; width: 77px; text-align: center; border: 1px solid #d4d4d4; border-bottom: 2px solid #fff; color: #4a6d96; background: #fff; }
.t8 { margin-left: 24px; }
.t9 { margin-left: 45px; }
.brand { position: absolute; left: 1467px; top: 0; color: #0a9a9a; font: bold 29px/40px "Liberation Sans", sans-serif; }

/* ribbon */
.ribbon { display: flex; height: 140px; padding-top: 8px; border-bottom: 3px solid #e0e0e0; flex: none; background: #fff; }
.g { display: flex; flex-direction: column; height: 120px; border-right: 2px solid #e4e4e4; position: relative; }
.g1 { width: 100px; padding-left: 6px; }
.g2 { width: 152px; }
.g3 { width: 83px; }
.g4 { width: 241px; }
.g5 { width: 683px; }
.gl { font-size: 18px; font-weight: 300; color: #888; text-align: center; line-height: 22px; margin-top: auto; margin-bottom: 1px; white-space: nowrap; letter-spacing: .5px; }
.g2 .gl { padding-left: 4px; }
.big { display: flex; flex-direction: column; align-items: center; flex: none; }
.bigi { flex: none; margin-top: 2px; }
.bl { font-size: 17px; font-weight: 300; color: #777; margin-top: 12px; line-height: 24px; white-space: nowrap; letter-spacing: .6px; }
.gbody { display: flex; }
.g2b { height: 96px; padding-left: 16px; }
.big.m { width: 50px; }
.minis { display: grid; grid-template-columns: 35px 20px; grid-auto-rows: 34px; margin-left: 16px; margin-top: 0; align-items: center; }
.svgq { font: bold 13px "Liberation Sans", sans-serif; fill: #16406e; }
.g3 { padding-left: 9px; }
.big.hl { background: #bdd1ec; width: 65px; height: 122px; margin-top: -2px; }
.big.hl .bigi { margin-top: 0; }
.big.hl .bl { margin-top: 16px; }
.big.hl + .gl { position: absolute; left: 0; right: 0; bottom: 0; margin: 0; }
.svgmv { font: bold 19px "Liberation Sans", sans-serif; fill: #1c2c66; text-anchor: middle; }
.evals { flex-direction: column; padding-left: 14px; margin-top: -2px; }
.ev { display: flex; align-items: center; height: 27px; }
.evi { width: 20px; display: inline-flex; flex: none; }
.evt { font-size: 17.500px; font-weight: 300; color: #666; white-space: nowrap; letter-spacing: .2px; margin-top: -4px; }
.ev.off .evt { color: #c8c8c8; }
.ev-hl { display: flex; align-items: center; gap: 8px; background: #bdd1ec; height: 27px; width: 103px; margin-left: 7px; padding-left: 6px; }
.g5b { height: 104px; }
.big.v { width: 110px; padding-left: 6px; }
.an { border-left: 1px solid #e8e8e8; padding-left: 10px; flex: none; }
.a1, .a2 { width: 93px; }
.a3 { width: 111px; }
.a4 { width: 85px; }
.a5 { width: 93px; }
.a6 { width: 97px; }
.ant { font-size: 17px; font-weight: 300; color: #666; letter-spacing: .6px; line-height: 28px; padding-left: 2px; white-space: nowrap; }
.anr { display: flex; align-items: center; height: 30px; margin-top: 1px; }
.ant + .anr { margin-top: 5px; }
.ans { font-size: 17px; font-weight: 300; color: #777; margin-left: 11px; letter-spacing: .4px; }
.cb { width: 19px; height: 20px; border: 1px solid #aaa; background: #fff; display: inline-flex; flex: none; }
.cb .c { margin: -1px; }
.set span { font-size: 17px; font-weight: 300; color: #666; margin-left: 4px; letter-spacing: .4px; }
.set svg { flex: none; }

/* work */
.work { flex: 1; display: flex; min-height: 0; }
.rail { width: 44px; background: #f6f7f7; flex: none; display: flex; flex-direction: column; align-items: center; padding-top: 12px; overflow: hidden; }
.ri { flex: none; margin-bottom: 25px; }
.heat { width: 24px; height: 24px; margin: 3px 0 17px; background: radial-gradient(circle at 15% 85%, #d40f0f 0 22%, #f3b01e 40%, #c14a5a 65%, #4b2f9a 100%); }
.rail-blue { width: 44px; height: 224px; padding-top: 8px; border-left: 2px solid #3a6ca8; display: flex; flex-direction: column; align-items: center; margin-bottom: 24px; flex: none; }
.rail-blue .ri { margin-bottom: 5px; }
.vtext { writing-mode: vertical-rl; font-size: 17px; font-weight: 300; color: #6a7f99; white-space: nowrap; }
.vtext .mono { font-size: 15px; }
.key { margin-bottom: 24px; }
.stage { flex: 1; display: flex; flex-direction: column; min-width: 0; }
.doctabs { height: 38px; border-bottom: 1px solid #2a5699; flex: none; padding: 2px 0 0 2px; background: #fff; }
.doctab { width: 330px; height: 35px; background: #2a5699; display: flex; align-items: center; padding-left: 21px; color: #fff; }
.doctab-t { font: 18px "Open Sans", "Noto Sans CJK SC", sans-serif; margin-left: 6px; white-space: nowrap; letter-spacing: .2px; width: 253px; }
.doctab-x { font: bold 20px "DejaVu Sans", sans-serif; }
.canvas { flex: 1; position: relative; background: #f9fbfb; overflow: hidden; }

/* model */
.model { position: absolute; left: 346px; top: 136px; }
.ml path, .ml ellipse { stroke: #2b6332; stroke-width: 2; }
.ml .top { fill: #4f9552; }

/* tree */
.tree { position: absolute; left: 0; top: 62px; width: 375px; }
.grip { height: 13px; background: linear-gradient(#ededed, #d2d2d2); border: 2px solid #8c8c8c; border-width: 2px 1px 1px 2px; display: flex; justify-content: center; margin-bottom: 3px; }
.dots { width: 38px; height: 2px; margin-top: 3px; background: repeating-linear-gradient(90deg, #3a62a0 0 2px, transparent 2px 4px); }
.row { height: 24px; display: flex; align-items: center; padding-left: 23px; position: relative; white-space: nowrap; }
.r-root { padding-left: 8px; }
.ex { width: 13px; height: 13px; margin-right: 11px; border: 1px solid #999; background: linear-gradient(#fff, #e6e6e6); font: 12px/10px "Liberation Sans", sans-serif; text-align: center; color: #222; flex: none; }
.ex.none { visibility: hidden; }
.tc { width: 19px; height: 18px; border: 1px solid #39496b; background: #fff; margin-right: 8px; flex: none; display: inline-flex; align-items: center; justify-content: center; margin-top: -2px; }
.tc.none { visibility: hidden; }
.lv2 { padding-left: 82px; }
.lv3 { padding-left: 109px; }
.abs-tc { position: absolute; left: 82px; top: 2px; margin: 0; }
.node { display: inline-grid; grid-template-columns: 29px auto; align-items: center; height: 22px; padding: 0 8px 0 0; border: 1px solid #c5ccd4; background: linear-gradient(#fdfdfd, #eceff2); font-size: 19px; line-height: 20px; color: #333; font-weight: 400; }
.node.root { width: 305px; padding-left: 4px; grid-template-columns: 25px auto; font: 18px/20px "Open Sans", "Noto Sans CJK SC", sans-serif; letter-spacing: -.2px; color: #222; }
.node.dim { color: #999; font-weight: 300; }
.base span { font: 18px/20px "Open Sans", sans-serif; }
.tight { letter-spacing: -.6px; }
.node.st { width: 94px; font-weight: 700; color: #111; font-size: 18.500px; }
.node.st.dim { font-weight: 700; color: #888; }
.seq { display: flex; align-items: center; width: 275px; height: 22px; background: linear-gradient(#f9d27f, #f4ac2e 55%, #f8c364); font-size: 19px; color: #111; position: relative; }
.seq b { margin-left: 3px; letter-spacing: -.3px; }
.seq-ar { margin-left: 12px; flex: none; }
.seq-tri { position: absolute; right: 14px; top: 3px; }

/* dialog */
.dlg { position: absolute; left: 827px; top: 31px; width: 740px; height: 705px; background: #f0f0f0; border: 1px solid #7c7c7c; box-shadow: 2px 4px 12px rgba(0, 0, 0, .25); font-size: 17px; }
.dlg-title { height: 44px; background: #fff; line-height: 42px; padding-left: 11px; font-size: 17px; color: #333; }
.dlg-body { display: flex; }
.dl { width: 229px; flex: none; padding: 17px 0 0 9px; font-weight: 300; color: #666; }
.chk { display: flex; align-items: center; white-space: nowrap; }
.box { width: 20px; height: 20px; border: 1px solid #555; background: #fff; margin-right: 4px; flex: none; display: inline-flex; }
.ck-user { height: 20px; line-height: 18px; }
.lab { white-space: nowrap; line-height: 22px; font-size: 17px; }
.cs { margin: 15px 0 0 5px; height: 20px; line-height: 20px; }
.sel { width: 198px; height: 28px; margin-left: 5px; border: 1px solid #3a80c0; background: #fff; display: flex; align-items: center; justify-content: space-between; padding: 2px 8px 2px 3px; }
.sel-t { background: #0078d7; color: #fff; height: 22px; line-height: 21px; padding: 0 1px; font-size: 17.500px; }
.grp { margin: 11px 0 0 5px; padding: 8px 12px 0; width: 198px; height: 170px; border: 1px solid #dcdcdc; display: block; }
.grp legend { padding: 0; font-size: 17px; line-height: 20px; margin-left: -3px; }
.grp .lab { height: 22px; margin-top: -1px; }
.inp { width: 171px; height: 27px; border: 1px solid #888; line-height: 26px; padding-left: 3px; font-size: 15px; color: #444; }
.grp .den { margin-top: 6px; }
.btn { background: #e1e1e1; border: 1px solid #adadad; text-align: center; font-weight: 300; color: #666; }
.chg { width: 111px; height: 30px; line-height: 27px; margin: 8px 0 0 62px; }
.prec { margin: 24px 0 0 5px; }
.spin { margin: 1px 0 0 5px; width: 90px; height: 27px; border: 1px solid #aaa; background: #fff; display: flex; justify-content: space-between; }
.spin-v { padding-left: 5px; font: 15px/25px "Liberation Mono", monospace; color: #222; }
.spin-b { width: 26px; background: #f0f0f0; border-left: 1px solid #ccc; display: flex; flex-direction: column; align-items: center; justify-content: space-around; padding: 1px; }
.spin-b i { width: 22px; height: 10px; background: #e1e1e1; border: 1px solid #bbb; position: relative; display: block; }
.up::after, .dn::after { content: ""; position: absolute; left: 6px; border: 4px solid transparent; }
.up::after { top: -3px; border-bottom: 5px solid #111; border-top: 0; }
.dn::after { top: 2px; border-top: 5px solid #111; border-bottom: 0; }
.dh { width: 193px; margin: 16px 0 0 2px; border: 0; border-top: 1px solid #b5b5b5; }
.ck-save { margin: 18px 0 0 7px; height: 20px; line-height: 18px; }
.ck-save .box { margin-right: 6px; }
.phys { margin: 34px 0 0 5px; }
.dr { flex: 1; min-width: 0; }
.dtabs { display: flex; height: 31px; align-items: flex-end; margin-top: 14px; }
.dt { width: 62px; height: 28px; background: #f0f0f0; border: 1px solid #e2e2e2; border-bottom: 0; padding-left: 4px; line-height: 30px; font-size: 18px; color: #222; }
.dt.on { width: 69px; height: 31px; background: #fff; padding-left: 7px; line-height: 28px; }
.panel { height: 526px; background: #fff; border: 1px solid #dedede; padding: 0; color: #222; position: relative; }
.mv { display: flex; padding: 15px 0 0 20px; height: 76px; font: 18px "Open Sans", "Noto Sans CJK SC", sans-serif; letter-spacing: -.3px; }
.fld span { display: block; line-height: 24px; height: 25px; white-space: nowrap; }
.box2 { height: 36px; border: 1px solid #8a8a8a; background: #fff; font: 18.500px/29px "Open Sans", "Noto Sans CJK SC", sans-serif; padding-left: 3px; white-space: nowrap; overflow: hidden; letter-spacing: -.2px; }
.wide { width: 214px; }
.volb { width: 209px; }
.vol { position: relative; flex: none; width: 209px; }
.vol::after { content: ""; box-sizing: border-box; position: absolute; left: -13px; top: -8px; width: 222px; height: 78px; border: 5px solid #e8323c; }
.sec { display: flex; align-items: center; white-space: nowrap; font-size: 17.500px; }
.sec1 { height: 24px; margin-top: 18px; padding-left: 14px; }
.ln { display: block; height: 2px; background: #8a8a8a; flex: none; }
.l1 { width: 225px; margin-left: 56px; }
.sh { margin-left: 14px; }
.l2 { width: 10px; margin-left: 65px; }
.cols { display: flex; height: 201px; }
.col { flex: none; }
.c-a { width: 318px; padding-left: 61px; border-right: 2px solid #8a8a8a; }
.c-b { padding-left: 50px; width: 130px; }
.c-b .sym { padding-left: 6px; }
.c-b .xyz span { width: 20px; }
.sym { display: flex; height: 63px; align-items: flex-start; padding-top: 14px; white-space: nowrap; font: 18px "Noto Sans CJK SC", sans-serif; position: relative; color: #333; }
.sym .box { width: 19px; height: 20px; margin-right: 5px; }
.cm { display: block; font: bold 15px "Liberation Sans", sans-serif; position: absolute; left: 170px; top: 0; }
.cm i { display: block; position: absolute; left: 20px; top: 14px; width: 14px; height: 15px; border-radius: 50%; background: #0ec20e; border: 2px solid #1a6d1a; }
.xyz { display: flex; align-items: center; gap: 10px; height: 36px; margin-bottom: 9px; font: 18px "Open Sans", sans-serif; }
.xyz span { width: 17px; flex: none; }
.xyz .box2 { width: 193px; flex: none; }
.sec2 { height: 24px; margin-top: 15px; padding-left: 11px; }
.l3 { width: 290px; margin-left: 74px; }
.mi { display: grid; grid-template-columns: 214px 210px 30px; padding-left: 20px; margin-top: 5px; row-gap: 5px; font: 18px "Open Sans", sans-serif; letter-spacing: -.3px; }
.f3 .box2 { width: 193px; height: 36px; }
.f3 .in { padding-left: 7px; height: 28px; line-height: 28px; }
.f3:nth-child(3n+2) .in { padding-left: 4px; }
.acts { display: flex; gap: 8px; padding-left: 114px; margin-top: 1px; }
.btn.a { width: 111px; height: 30px; line-height: 27px; flex: none; font-size: 17px; }
.btn.a.cut { height: 20px; margin-top: 10px; overflow: hidden; line-height: 20px; }
.cut span { display: block; margin-top: -5px; }

/* watermark */
.wm { position: absolute; left: 1223px; top: 658px; display: flex; gap: 8px; pointer-events: none; }
.wm-t { display: flex; flex-direction: column; }
.wm-a { font-size: 42px; line-height: 56px; font-weight: 700; color: rgba(251, 252, 253, .85); white-space: nowrap; }
.wm-b { font: 15px/20px "Liberation Sans", sans-serif; color: rgba(245, 248, 250, .95); letter-spacing: 2.900px; white-space: nowrap; margin: -3px 0 0 1px; }
```
